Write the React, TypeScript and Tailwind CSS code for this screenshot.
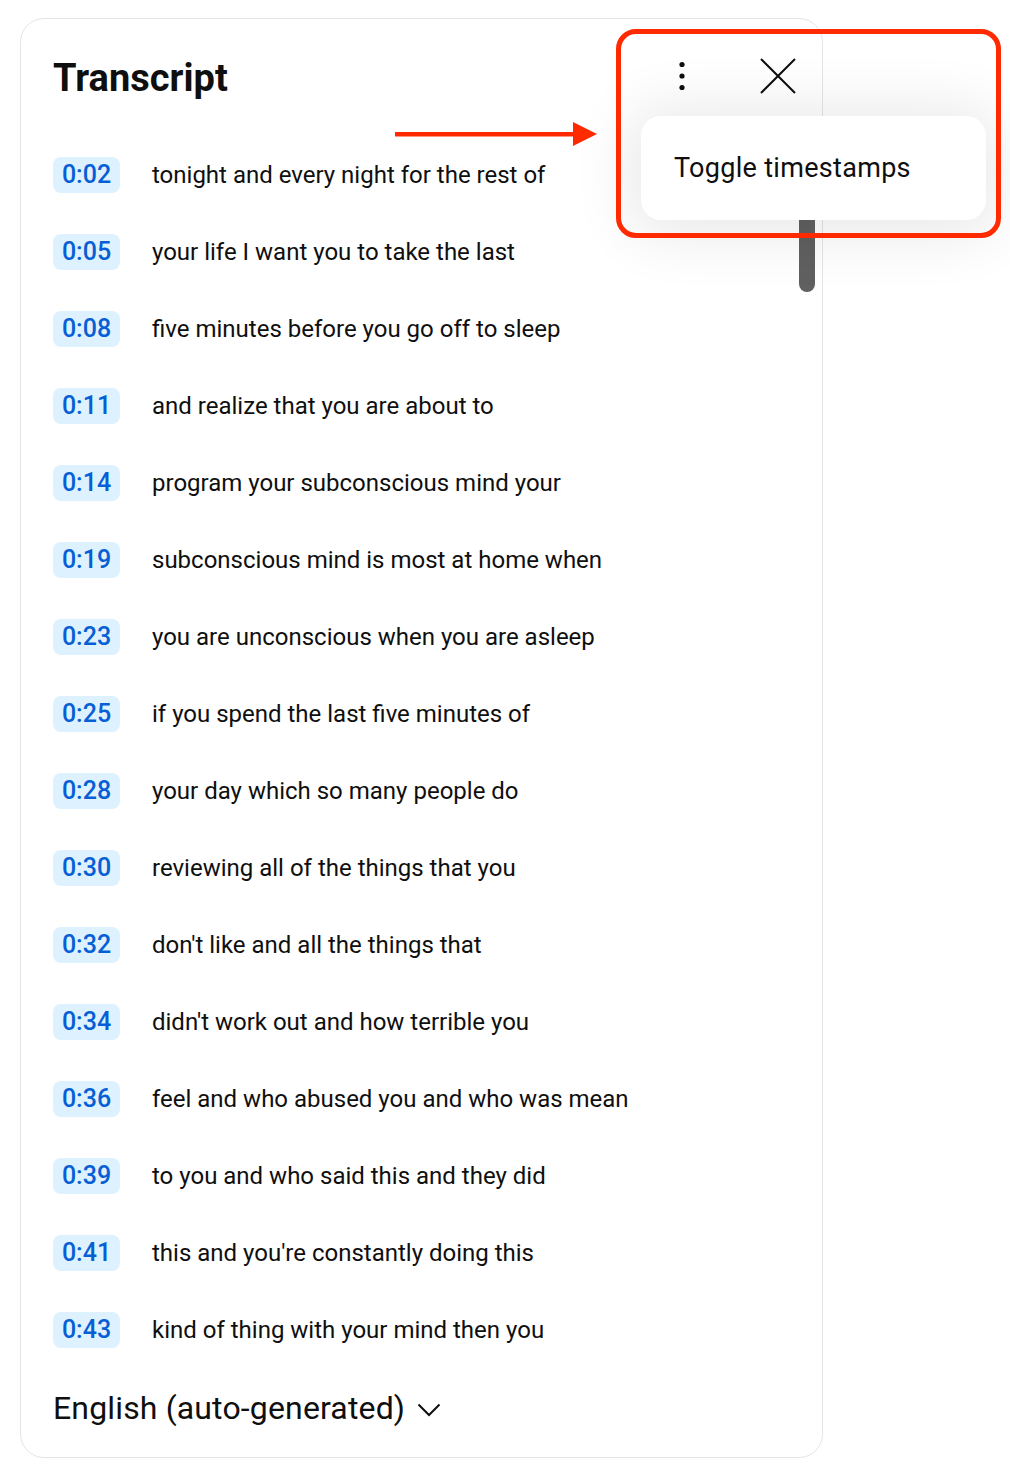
import React from "react";

const rows: [string, string][] = [
  ["0:02", "tonight and every night for the rest of"],
  ["0:05", "your life I want you to take the last"],
  ["0:08", "five minutes before you go off to sleep"],
  ["0:11", "and realize that you are about to"],
  ["0:14", "program your subconscious mind your"],
  ["0:19", "subconscious mind is most at home when"],
  ["0:23", "you are unconscious when you are asleep"],
  ["0:25", "if you spend the last five minutes of"],
  ["0:28", "your day which so many people do"],
  ["0:30", "reviewing all of the things that you"],
  ["0:32", "don't like and all the things that"],
  ["0:34", "didn't work out and how terrible you"],
  ["0:36", "feel and who abused you and who was mean"],
  ["0:39", "to you and who said this and they did"],
  ["0:41", "this and you're constantly doing this"],
  ["0:43", "kind of thing with your mind then you"],
];

export default function App() {
  return (
    <div className="relative w-[1010px] h-[1482px] bg-white font-[Roboto,sans-serif] text-[#0f0f0f] pt-[18px] pl-[20px] overflow-hidden">
      <div className="relative w-[803px] h-[1440px] border border-[#e5e5e5] rounded-[24px] flex flex-col px-[32px] pt-[35px] pb-[32px]">
        <div className="flex items-center justify-between h-[44px] mr-[-8px]">
          <h1 className="text-[38px] font-bold leading-[44px] pt-[3px]">Transcript</h1>
          <div className="flex items-center gap-[56px]">
            <div className="w-[40px] h-[40px] flex items-center justify-center">
              <svg width="10" height="30" viewBox="0 0 10 30">
                <circle cx="5" cy="3.5" r="2.6" fill="#0f0f0f" />
                <circle cx="5" cy="15" r="2.6" fill="#0f0f0f" />
                <circle cx="5" cy="26.5" r="2.6" fill="#0f0f0f" />
              </svg>
            </div>
            <div className="w-[40px] h-[40px] flex items-center justify-center">
              <svg width="36" height="36" viewBox="0 0 36 36">
                <path d="M1 1 L35 35 M35 1 L1 35" stroke="#0f0f0f" strokeWidth="2" fill="none" />
              </svg>
            </div>
          </div>
        </div>

        <div className="mt-[38px] flex flex-col">
          {rows.map(([t, s]) => (
            <div key={t} className="h-[77px] flex items-center gap-[32px]">
              <span className="w-[67px] h-[36px] rounded-[8px] bg-[#def1ff] text-[#065fd4] text-[25px] font-medium flex items-center justify-center leading-none">
                {t}
              </span>
              <span className="text-[24px] leading-[30px]">{s}</span>
            </div>
          ))}
        </div>

        <div className="mt-[22px] flex items-center gap-[12px]">
          <span className="text-[32px] leading-[37px] tracking-[0.15px]">English (auto-generated)</span>
          <svg width="24" height="14" viewBox="0 0 24 14" className="mt-[2px]">
            <path d="M1.5 1.5 L12 12 L22.5 1.5" stroke="#0f0f0f" strokeWidth="2" fill="none" />
          </svg>
        </div>

        <div className="absolute left-[778px] top-[111px] w-[16px] h-[162px] rounded-full bg-[#606060]" />
      </div>

      <div className="absolute left-[641px] top-[116px] w-[345px] h-[104px] rounded-[20px] bg-white shadow-[0_4px_60px_12px_rgba(0,0,0,0.09)] flex items-center pl-[33px]">
        <span className="text-[27px] leading-[32px] tracking-[0.3px] text-[#0f0f0f]">Toggle timestamps</span>
      </div>

      <div className="absolute left-[616px] top-[29px] w-[385px] h-[209px] border-[5px] border-[#ff2a00] rounded-[20px]" />

      <svg className="absolute left-[394px] top-[121px]" width="206" height="26" viewBox="0 0 206 26">
        <rect x="1" y="11" width="180" height="4.5" fill="#ff2a00" />
        <path d="M179 1 L203 13 L179 25 Z" fill="#ff2a00" />
      </svg>
    </div>
  );
}
